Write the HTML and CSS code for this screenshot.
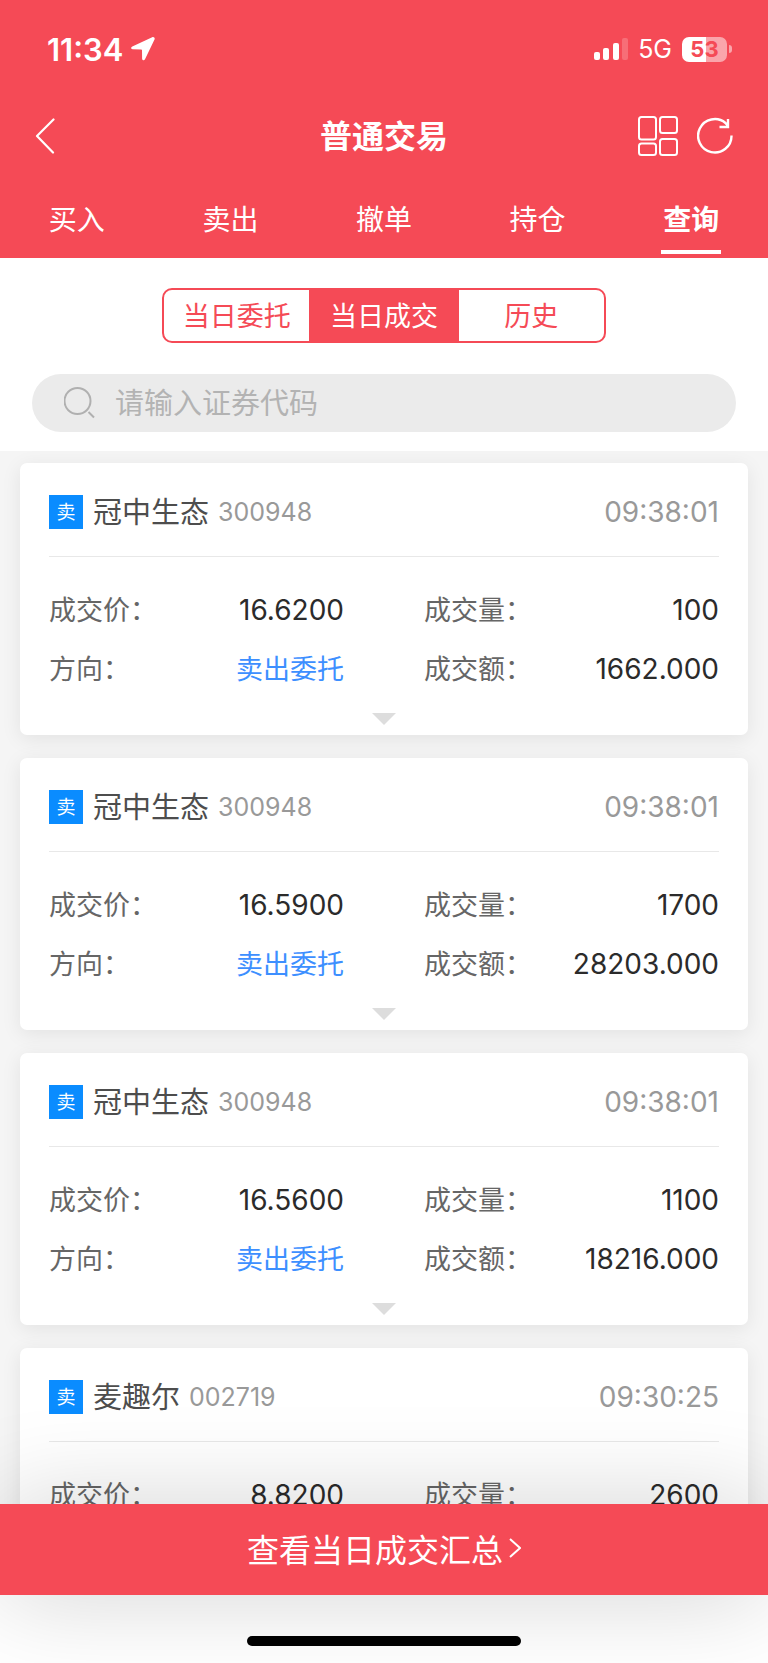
FILE: index.html
```html
<!DOCTYPE html>
<html lang="zh-CN">
<head>
    <meta charset="UTF-8">
    <meta name="viewport" content="width=device-width, initial-scale=1.0">
    <title>普通交易</title>
    <link rel="stylesheet" href="styles.css">
</head>
<body>
    <header class="header">
        <div class="status-bar">
            <div class="status-left">
                <span class="clock">11:34</span>
                <svg width="24" height="24" viewBox="0 0 24 24" fill="#fff">
                    <path d="M21.2 0.3 1.3 9.6C-0.5 10.5-0.1 12.3 1.6 12.3L10.2 12.5C10.8 12.5 11 12.8 11 13.3L11.1 21.8C11.2 23.5 13.2 23.9 14 22.3L23.5 2.6C24.2 1 22.8-0.4 21.2 0.3Z"/>
                </svg>
            </div>
            <div class="status-right">
                <svg width="34" height="24" viewBox="0 0 34 24" fill="#fff">
                    <rect x="0" y="15" width="6" height="8" rx="2"/>
                    <rect x="9" y="11" width="6" height="12" rx="2"/>
                    <rect x="19" y="6" width="6" height="17" rx="2"/>
                    <rect x="28" y="1" width="6" height="22" rx="2" opacity="0.2"/>
                </svg>
                <span class="network">5G</span>
                <div class="battery"><span class="battery-level">53</span></div>
            </div>
        </div>

        <div class="title-bar">
            <button class="icon-btn" aria-label="返回">
                <svg width="20" height="36" viewBox="0 0 20 36" fill="none" stroke="#fff" stroke-width="2.2" stroke-linecap="round" stroke-linejoin="round">
                    <path d="M18.500 1.500 2 18 18 34.500"/>
                </svg>
            </button>
            <h1 class="title">普通交易</h1>
            <div class="actions">
                <button class="icon-btn" aria-label="功能">
                    <svg width="40" height="40" viewBox="0 0 40 40" fill="none" stroke="#fff" stroke-width="2">
                        <rect x="1" y="1" width="17" height="22.500" rx="2.500"/>
                        <rect x="22" y="1" width="17" height="16" rx="2.500"/>
                        <rect x="1" y="27.500" width="17" height="11.500" rx="2.500"/>
                        <rect x="22" y="23" width="17" height="16" rx="2.500"/>
                    </svg>
                </button>
                <button class="icon-btn" aria-label="刷新">
                    <svg width="36" height="40" viewBox="0 0 36 40" fill="none" stroke="#fff" stroke-width="2.400">
                        <path d="M34.500 19.500A16.700 16.700 0 1 1 28.500 7L31 10M31 3V11H22.500"/>
                    </svg>
                </button>
            </div>
        </div>

        <nav class="tabs">
            <a class="tab" href="#">买入</a>
            <a class="tab" href="#">卖出</a>
            <a class="tab" href="#">撤单</a>
            <a class="tab" href="#">持仓</a>
            <a class="tab active" href="#">查询</a>
        </nav>
    </header>

    <section class="filters">
        <div class="segments">
            <button class="segment">当日委托</button>
            <button class="segment selected">当日成交</button>
            <button class="segment">历史</button>
        </div>
        <label class="search">
            <svg width="32" height="32" viewBox="0 0 32 32" fill="none" stroke="#b0b0b0" stroke-width="2">
                <circle cx="13.500" cy="14" r="13"/>
                <path d="M24.500 25 30 30.500"/>
            </svg>
            <input type="text" placeholder="请输入证券代码" aria-label="证券代码">
        </label>
    </section>

    <main class="list">
        <article class="card">
            <div class="card-head">
                <span class="badge">卖</span>
                <h2 class="name">冠中生态</h2>
                <span class="code">300948</span>
                <time class="time">09:38:01</time>
            </div>
            <dl class="details">
                <div class="item"><dt>成交价：</dt><dd>16.6200</dd></div>
                <div class="item"><dt>成交量：</dt><dd>100</dd></div>
                <div class="item"><dt>方向：</dt><dd class="sell">卖出委托</dd></div>
                <div class="item"><dt>成交额：</dt><dd>1662.000</dd></div>
            </dl>
            <button class="expand" aria-label="展开"></button>
        </article>

        <article class="card">
            <div class="card-head">
                <span class="badge">卖</span>
                <h2 class="name">冠中生态</h2>
                <span class="code">300948</span>
                <time class="time">09:38:01</time>
            </div>
            <dl class="details">
                <div class="item"><dt>成交价：</dt><dd>16.5900</dd></div>
                <div class="item"><dt>成交量：</dt><dd>1700</dd></div>
                <div class="item"><dt>方向：</dt><dd class="sell">卖出委托</dd></div>
                <div class="item"><dt>成交额：</dt><dd>28203.000</dd></div>
            </dl>
            <button class="expand" aria-label="展开"></button>
        </article>

        <article class="card">
            <div class="card-head">
                <span class="badge">卖</span>
                <h2 class="name">冠中生态</h2>
                <span class="code">300948</span>
                <time class="time">09:38:01</time>
            </div>
            <dl class="details">
                <div class="item"><dt>成交价：</dt><dd>16.5600</dd></div>
                <div class="item"><dt>成交量：</dt><dd>1100</dd></div>
                <div class="item"><dt>方向：</dt><dd class="sell">卖出委托</dd></div>
                <div class="item"><dt>成交额：</dt><dd>18216.000</dd></div>
            </dl>
            <button class="expand" aria-label="展开"></button>
        </article>

        <article class="card">
            <div class="card-head">
                <span class="badge">卖</span>
                <h2 class="name">麦趣尔</h2>
                <span class="code">002719</span>
                <time class="time">09:30:25</time>
            </div>
            <dl class="details">
                <div class="item"><dt>成交价：</dt><dd>8.8200</dd></div>
                <div class="item"><dt>成交量：</dt><dd>2600</dd></div>
            </dl>
        </article>
    </main>

    <footer class="footer">
        <a class="summary" href="#">
            查看当日成交汇总
            <svg width="12" height="20" viewBox="0 0 12 20" fill="none" stroke="#fff" stroke-width="2">
                <path d="M1 1 11 10 1 19"/>
            </svg>
        </a>
        <div class="home-indicator"></div>
    </footer>
</body>
</html>
```
FILE: styles.css
```css
* {
    box-sizing: border-box;
}
body {
    margin: 0;
    height: 100vh;
    display: flex;
    flex-direction: column;
    overflow: hidden;
    background-color: #f5f5f5;
    color: #2b2b2b;
    font-family: Inter, "Noto Sans CJK SC", sans-serif;
    font-size: 27px;
}
button {
    padding: 0;
    border: none;
    background: none;
    font: inherit;
    color: inherit;
    cursor: pointer;
}
a {
    color: inherit;
    text-decoration: none;
}
svg {
    display: block;
}

/* header */
.header {
    flex-shrink: 0;
    background-color: #f54a56;
    color: white;
}
.status-bar {
    display: flex;
    align-items: center;
    justify-content: space-between;
    height: 98px;
    padding: 0 37px 0 47px;
}
.status-left {
    display: flex;
    align-items: center;
    gap: 8px;
}
.clock {
    font-size: 31px;
    font-weight: 600;
}
.status-right {
    display: flex;
    align-items: center;
    gap: 10px;
}
.network {
    font-size: 25px;
}
.battery {
    position: relative;
    width: 45px;
    height: 25px;
    margin-right: 4px;
    border-radius: 7px;
    background: linear-gradient(to right, white 53%, rgba(255,255,255,0.5) 53%);
    text-align: center;
}
.battery::after {
    content: "";
    position: absolute;
    top: 8px;
    right: -5px;
    width: 3px;
    height: 8px;
    border-radius: 0 4px 4px 0;
    background-color: rgba(255,255,255,0.5);
}
.battery-level {
    display: block;
    color: #f54a56;
    font-size: 22px;
    font-weight: 700;
    line-height: 25px;
}
.title-bar {
    display: flex;
    align-items: center;
    justify-content: space-between;
    height: 76px;
    padding: 0 35px;
}
.title {
    flex: 1;
    margin: 0;
    padding: 0 0 4px 75px;
    text-align: center;
    font-size: 32px;
    font-weight: 600;
}
.actions {
    display: flex;
    gap: 19px;
}
.tabs {
    display: grid;
    grid-template-columns: repeat(5, 1fr);
    padding-top: 8px;
}
.tab {
    position: relative;
    text-align: center;
    font-size: 28px;
    line-height: 76px;
}
.tab.active {
    font-weight: 600;
}
.tab.active::after {
    content: "";
    position: absolute;
    left: 50%;
    bottom: 4px;
    width: 60px;
    height: 4px;
    margin-left: -30px;
    background-color: white;
}

/* filters */
.filters {
    flex-shrink: 0;
    padding: 30px 32px 19px;
    background-color: white;
}
.segments {
    display: grid;
    grid-template-columns: 1fr 34% 1fr;
    width: 63%;
    height: 55px;
    margin: 0 auto 31px;
    border: 2px solid #f54a56;
    border-radius: 10px;
    overflow: hidden;
}
.segment {
    padding-bottom: 2px;
    color: #f54a56;
}
.segment.selected {
    background-color: #f54a56;
    color: white;
}
.search {
    display: flex;
    align-items: center;
    gap: 19px;
    height: 58px;
    padding: 0 32px;
    border-radius: 29px;
    background-color: #ebebeb;
}
.search input {
    flex: 1;
    min-width: 0;
    padding: 0;
    border: none;
    outline: none;
    background: none;
    font: inherit;
    font-size: 29px;
}
.search input::placeholder {
    color: #b3b3b3;
}

/* trade cards */
.list {
    flex: 1;
    min-height: 0;
    display: flex;
    flex-direction: column;
    gap: 23px;
    padding: 12px 20px 0;
    overflow: hidden;
}
.card {
    flex-shrink: 0;
    height: 272px;
    padding: 0 29px;
    border-radius: 7px;
    background-color: white;
    box-shadow: 0 4px 20px rgba(0,0,0,0.08);
}
.card-head {
    display: flex;
    align-items: center;
    height: 94px;
    padding-top: 4px;
    border-bottom: 1px solid #e8e8e8;
}
.badge {
    width: 34px;
    height: 34px;
    margin-right: 10px;
    background-color: #0a8cff;
    color: white;
    font-size: 19px;
    line-height: 35px;
    text-align: center;
}
.name {
    margin: 0 9px 0 0;
    padding-bottom: 4px;
    color: #4d4d4d;
    font-size: 29px;
    font-weight: 400;
}
.code {
    color: #999;
    font-size: 25px;
}
.time {
    margin-left: auto;
    color: #999;
    font-size: 28px;
}
.details {
    display: grid;
    grid-template-columns: 1fr 1fr;
    column-gap: 80px;
    margin: 0;
    padding-top: 24px;
}
.item {
    display: flex;
    justify-content: space-between;
    line-height: 59px;
}
.item dt {
    color: #666;
}
.item dd {
    margin: 0;
    font-size: 28px;
}
.item .sell {
    color: #3d8fff;
    font-size: 27px;
}
.expand {
    display: block;
    width: 0;
    height: 0;
    margin: 14px auto 0;
    border: 12px solid transparent;
    border-top-color: #ddd;
    border-bottom: 0;
}

/* footer */
.footer {
    flex-shrink: 0;
    background-color: white;
}
.summary {
    position: relative;
    display: flex;
    align-items: center;
    justify-content: center;
    gap: 6px;
    height: 91px;
    padding-bottom: 3px;
    background-color: #f54a56;
    box-shadow: 0 0 100px rgba(0,0,0,0.18);
    color: white;
    font-size: 32px;
}
.home-indicator {
    position: relative;
    width: 274px;
    height: 10px;
    margin: 41px auto 17px;
    border-radius: 5px;
    background-color: black;
}
```
